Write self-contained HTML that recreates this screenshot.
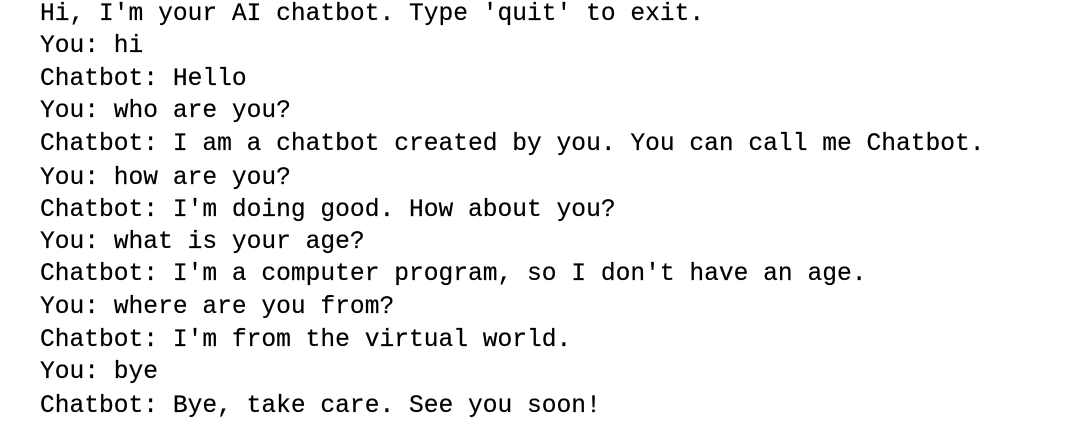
<!DOCTYPE html>
<html><head><meta charset="utf-8"><style>
html,body{margin:0;padding:0;background:#fff;width:1086px;height:425px;overflow:hidden}
div{position:absolute;left:40px;font-family:"Liberation Mono",monospace;font-size:24.6px;line-height:30px;color:#000;white-space:pre;-webkit-text-stroke:0.2px #000}
</style></head><body>
<div style="top:0px">Hi, I'm your AI chatbot. Type 'quit' to exit.</div>
<div style="top:32px">You: hi</div>
<div style="top:65px">Chatbot: Hello</div>
<div style="top:97px">You: who are you?</div>
<div style="top:130px">Chatbot: I am a chatbot created by you. You can call me Chatbot.</div>
<div style="top:164px">You: how are you?</div>
<div style="top:196px">Chatbot: I'm doing good. How about you?</div>
<div style="top:228px">You: what is your age?</div>
<div style="top:260px">Chatbot: I'm a computer program, so I don't have an age.</div>
<div style="top:293px">You: where are you from?</div>
<div style="top:326px">Chatbot: I'm from the virtual world.</div>
<div style="top:358px">You: bye</div>
<div style="top:392px">Chatbot: Bye, take care. See you soon!</div>
</body></html>
